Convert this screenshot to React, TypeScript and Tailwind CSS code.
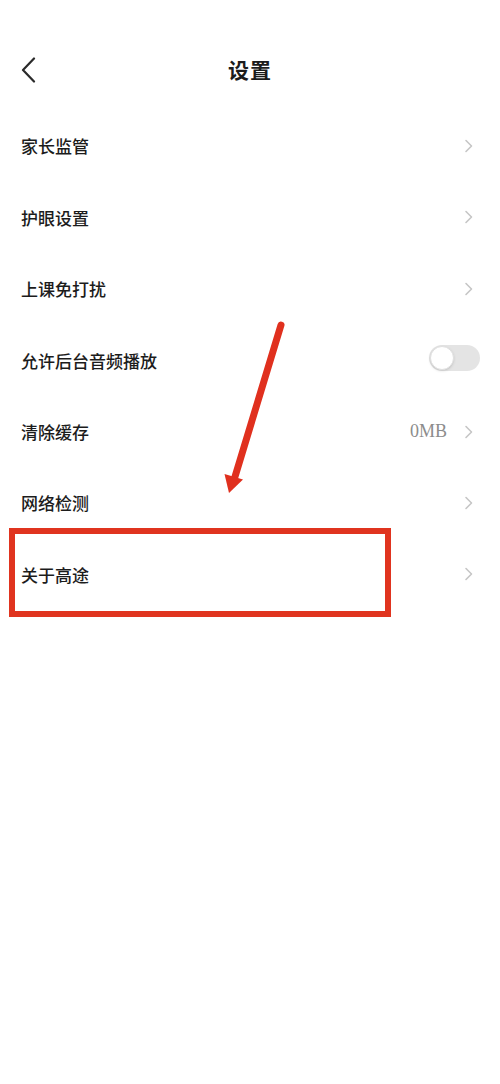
import { useState } from 'react'

const ROWS: { label: string; kind: 'link' | 'toggle' | 'cache' }[] = [
  { label: '家长监管', kind: 'link' },
  { label: '护眼设置', kind: 'link' },
  { label: '上课免打扰', kind: 'link' },
  { label: '允许后台音频播放', kind: 'toggle' },
  { label: '清除缓存', kind: 'cache' },
  { label: '网络检测', kind: 'link' },
  { label: '关于高途', kind: 'link' },
]

const FONT = { fontFamily: '"Noto Sans CJK SC", "Noto Sans", sans-serif' }

function Chevron() {
  return (
    <svg width="10" height="14" viewBox="0 0 10 14" fill="none">
      <path d="M2 1.5 L7.5 7 L2 12.5" stroke="#c6c6c6" strokeWidth="1.6" strokeLinecap="round" strokeLinejoin="round" />
    </svg>
  )
}

function Toggle() {
  const [on, setOn] = useState(false)
  return (
    <button
      type="button"
      onClick={() => setOn(v => !v)}
      className={`relative h-[26px] w-[51px] rounded-full ${on ? 'bg-[#4f8bff]' : 'bg-[#e4e4e4]'}`}
    >
      <span
        className={`absolute top-px h-6 w-6 rounded-full bg-white border border-[#e0e0e0] shadow-sm ${on ? 'left-[26px]' : 'left-px'}`}
      />
    </button>
  )
}

export default function App() {
  return (
    <div className="relative min-h-[1084px] w-full bg-white pt-[52px] text-[#1c1c1c]" style={FONT}>
      {/* header */}
      <div className="relative flex h-9 items-center justify-center">
        <button type="button" className="absolute left-[19px] top-[5px]">
          <svg width="20" height="26" viewBox="0 0 20 26" fill="none">
            <path d="M15 1.5 L4 13 L15 24.5" stroke="#2a2a2a" strokeWidth="2.2" strokeLinecap="round" strokeLinejoin="round" />
          </svg>
        </button>
        <h1 className="text-[21px] font-bold tracking-[1px]">设置</h1>
      </div>

      {/* rows */}
      <div className="mt-[22.4px]">
        {ROWS.map(row => (
          <div key={row.label} className="relative flex h-[71.4px] items-center justify-between pl-[21px] pr-[26px]">
            <span className="text-[17px] font-medium">{row.label}</span>
            {row.kind === 'toggle' ? (
              <span className="-mr-[6px]"><Toggle /></span>
            ) : row.kind === 'cache' ? (
              <span className="flex items-center gap-[17px]">
                <span className="text-[18px] text-[#8c8c8c]" style={{ fontFamily: '"Liberation Serif", serif' }}>0MB</span>
                <Chevron />
              </span>
            ) : (
              <Chevron />
            )}
            {row.label === '关于高途' && (
              <div className="pointer-events-none absolute left-[9px] top-[-11px] h-[89px] w-[382px] border-[6px] border-[#e0341f]" />
            )}
          </div>
        ))}
      </div>

      {/* annotation arrow */}
      <svg className="pointer-events-none absolute left-0 top-0" width="500" height="600" viewBox="0 0 500 600">
        <line x1="281" y1="325" x2="234" y2="480" stroke="#e0301e" strokeWidth="7" strokeLinecap="round" />
        <polygon points="229,493 224.5,474 243,479.5" fill="#e0301e" />
      </svg>
    </div>
  )
}
